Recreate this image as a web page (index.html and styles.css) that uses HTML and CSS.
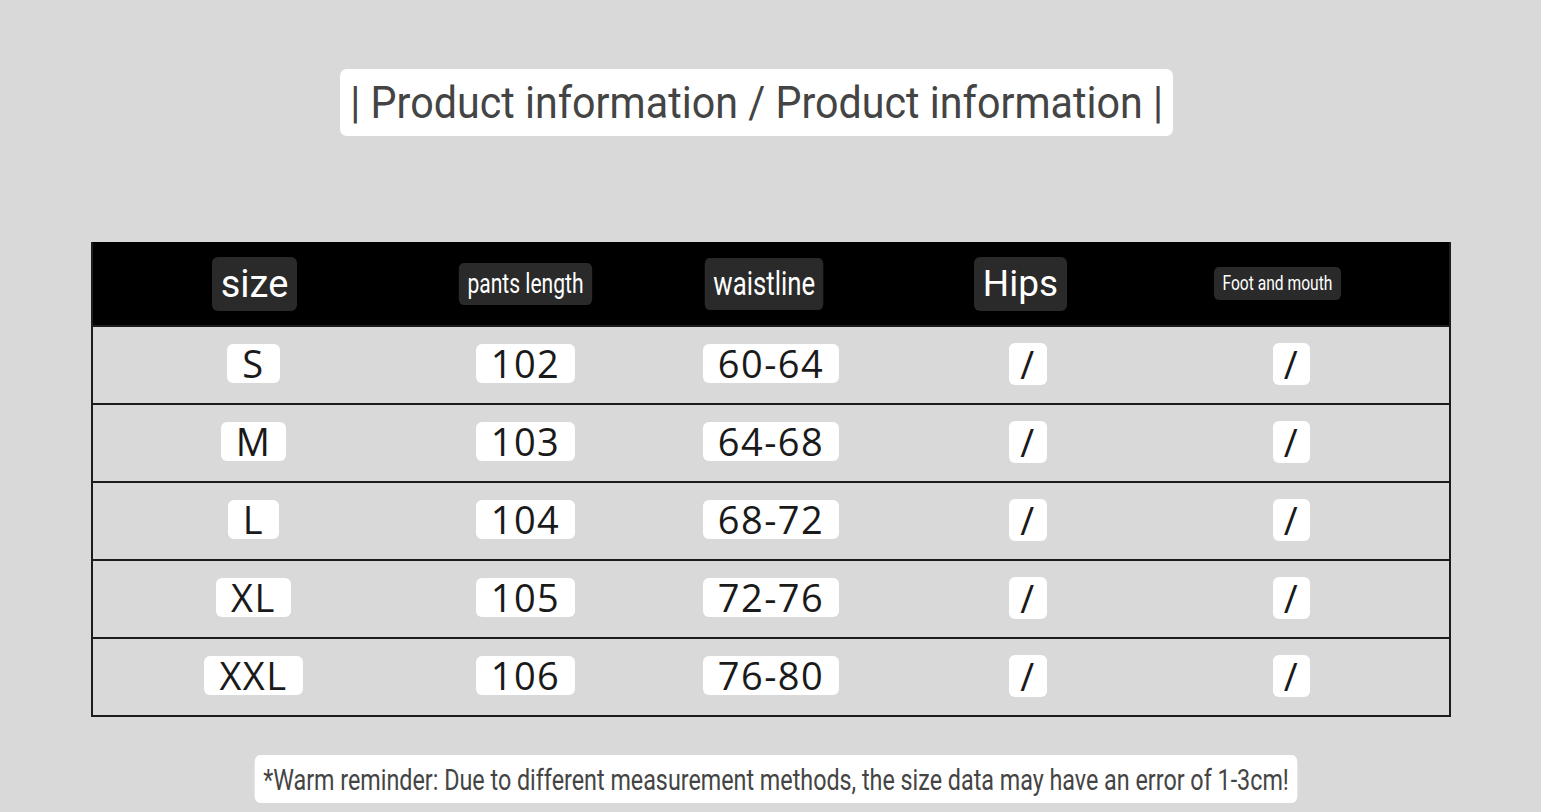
FILE: index.html
```html
<!DOCTYPE html>
<html lang="en">
<head>
<meta charset="utf-8">
<title>Product information</title>
<link rel="stylesheet" href="styles.css">
</head>
<body>
<main class="page">
  <h1 class="title">| Product information / Product information |</h1>

  <section class="size-table">
    <div class="head-row">
      <div class="cell"><span class="hchip hchip-size">size</span></div>
      <div class="cell"><span class="hchip hchip-pants">pants length</span></div>
      <div class="cell"><span class="hchip hchip-waist">waistline</span></div>
      <div class="cell"><span class="hchip hchip-hips">Hips</span></div>
      <div class="cell"><span class="hchip hchip-foot">Foot and mouth</span></div>
    </div>
    <div class="row">
      <div class="cell"><span class="chip">S</span></div>
      <div class="cell"><span class="chip">102</span></div>
      <div class="cell"><span class="chip">60-64</span></div>
      <div class="cell"><span class="chip chip-slash">/</span></div>
      <div class="cell"><span class="chip chip-slash">/</span></div>
    </div>
    <div class="row">
      <div class="cell"><span class="chip">M</span></div>
      <div class="cell"><span class="chip">103</span></div>
      <div class="cell"><span class="chip">64-68</span></div>
      <div class="cell"><span class="chip chip-slash">/</span></div>
      <div class="cell"><span class="chip chip-slash">/</span></div>
    </div>
    <div class="row">
      <div class="cell"><span class="chip">L</span></div>
      <div class="cell"><span class="chip">104</span></div>
      <div class="cell"><span class="chip">68-72</span></div>
      <div class="cell"><span class="chip chip-slash">/</span></div>
      <div class="cell"><span class="chip chip-slash">/</span></div>
    </div>
    <div class="row">
      <div class="cell"><span class="chip">XL</span></div>
      <div class="cell"><span class="chip">105</span></div>
      <div class="cell"><span class="chip">72-76</span></div>
      <div class="cell"><span class="chip chip-slash">/</span></div>
      <div class="cell"><span class="chip chip-slash">/</span></div>
    </div>
    <div class="row">
      <div class="cell"><span class="chip">XXL</span></div>
      <div class="cell"><span class="chip">106</span></div>
      <div class="cell"><span class="chip">76-80</span></div>
      <div class="cell"><span class="chip chip-slash">/</span></div>
      <div class="cell"><span class="chip chip-slash">/</span></div>
    </div>
  </section>

  <p class="note">*Warm reminder: Due to different measurement methods, the size data may have an error of 1-3cm!</p>
</main>
</body>
</html>
```

FILE: styles.css
```css
* { box-sizing: border-box; }

html, body {
  margin: 0;
  padding: 0;
  background: #d9d9d9;
}

body {
  font-family: Roboto, "Liberation Sans", sans-serif;
  color: #444;
}

.page {
  display: flex;
  flex-direction: column;
  align-items: center;
  padding-top: 69px;
}

.title {
  margin: 0 28px 0 0;
  background: #fff;
  border-radius: 7px;
  height: 67px;
  padding: 0 11px;
  display: flex;
  align-items: center;
  font-weight: 400;
  font-size: 44px;
  color: #444;
  white-space: nowrap;
  transform: scaleX(0.937);
}

.size-table {
  margin-top: 106px;
  width: 1360px;
  border: 2px solid #1c1c1c;
  border-top: 0;
  display: flex;
  flex-direction: column;
}

.head-row {
  background: #000;
  height: 83px;
  display: grid;
  grid-template-columns: 324px 218px 260px 252px 262px 1fr;
  align-items: center;
}

.row {
  height: 78px;
  border-top: 2px solid #1c1c1c;
  display: grid;
  grid-template-columns: 322px 222px 269px 245px 282px 1fr;
  align-items: center;
}

.cell {
  display: flex;
  justify-content: center;
  align-items: center;
}

.hchip {
  display: inline-block;
  background: #2a2a2a;
  color: #fff;
  border-radius: 6px;
  white-space: nowrap;
}

.hchip-size {
  font-size: 38px;
  line-height: 54px;
  padding: 0 9px;
}

.hchip-hips {
  font-size: 37px;
  line-height: 54px;
  padding: 0 9px;
}

.hchip-pants {
  font-size: 27px;
  line-height: 42px;
  padding: 0 11px;
  transform: scaleX(0.78);
}

.hchip-waist {
  font-size: 33px;
  line-height: 52px;
  padding: 0 11px;
  transform: scaleX(0.78);
}

.hchip-foot {
  font-size: 20px;
  line-height: 33px;
  padding: 0 11px;
  transform: scaleX(0.78);
}

.chip {
  display: inline-block;
  background: #fff;
  color: #1a1a1a;
  border-radius: 6px;
  font-family: "Open Sans", "Noto Sans", sans-serif;
  font-weight: 500;
  font-size: 38px;
  line-height: 39px;
  padding: 0 15px;
  letter-spacing: 1.5px;
  margin-top: -3px;
}

.chip-slash {
  padding: 0 11px;
  line-height: 42px;
}

.note {
  margin: 38px 0 0 12px;
  background: #fff;
  border-radius: 7px;
  height: 48px;
  padding: 0 11px;
  display: flex;
  align-items: center;
  font-size: 30px;
  color: #444;
  white-space: nowrap;
  transform: scaleX(0.777);
}
```
